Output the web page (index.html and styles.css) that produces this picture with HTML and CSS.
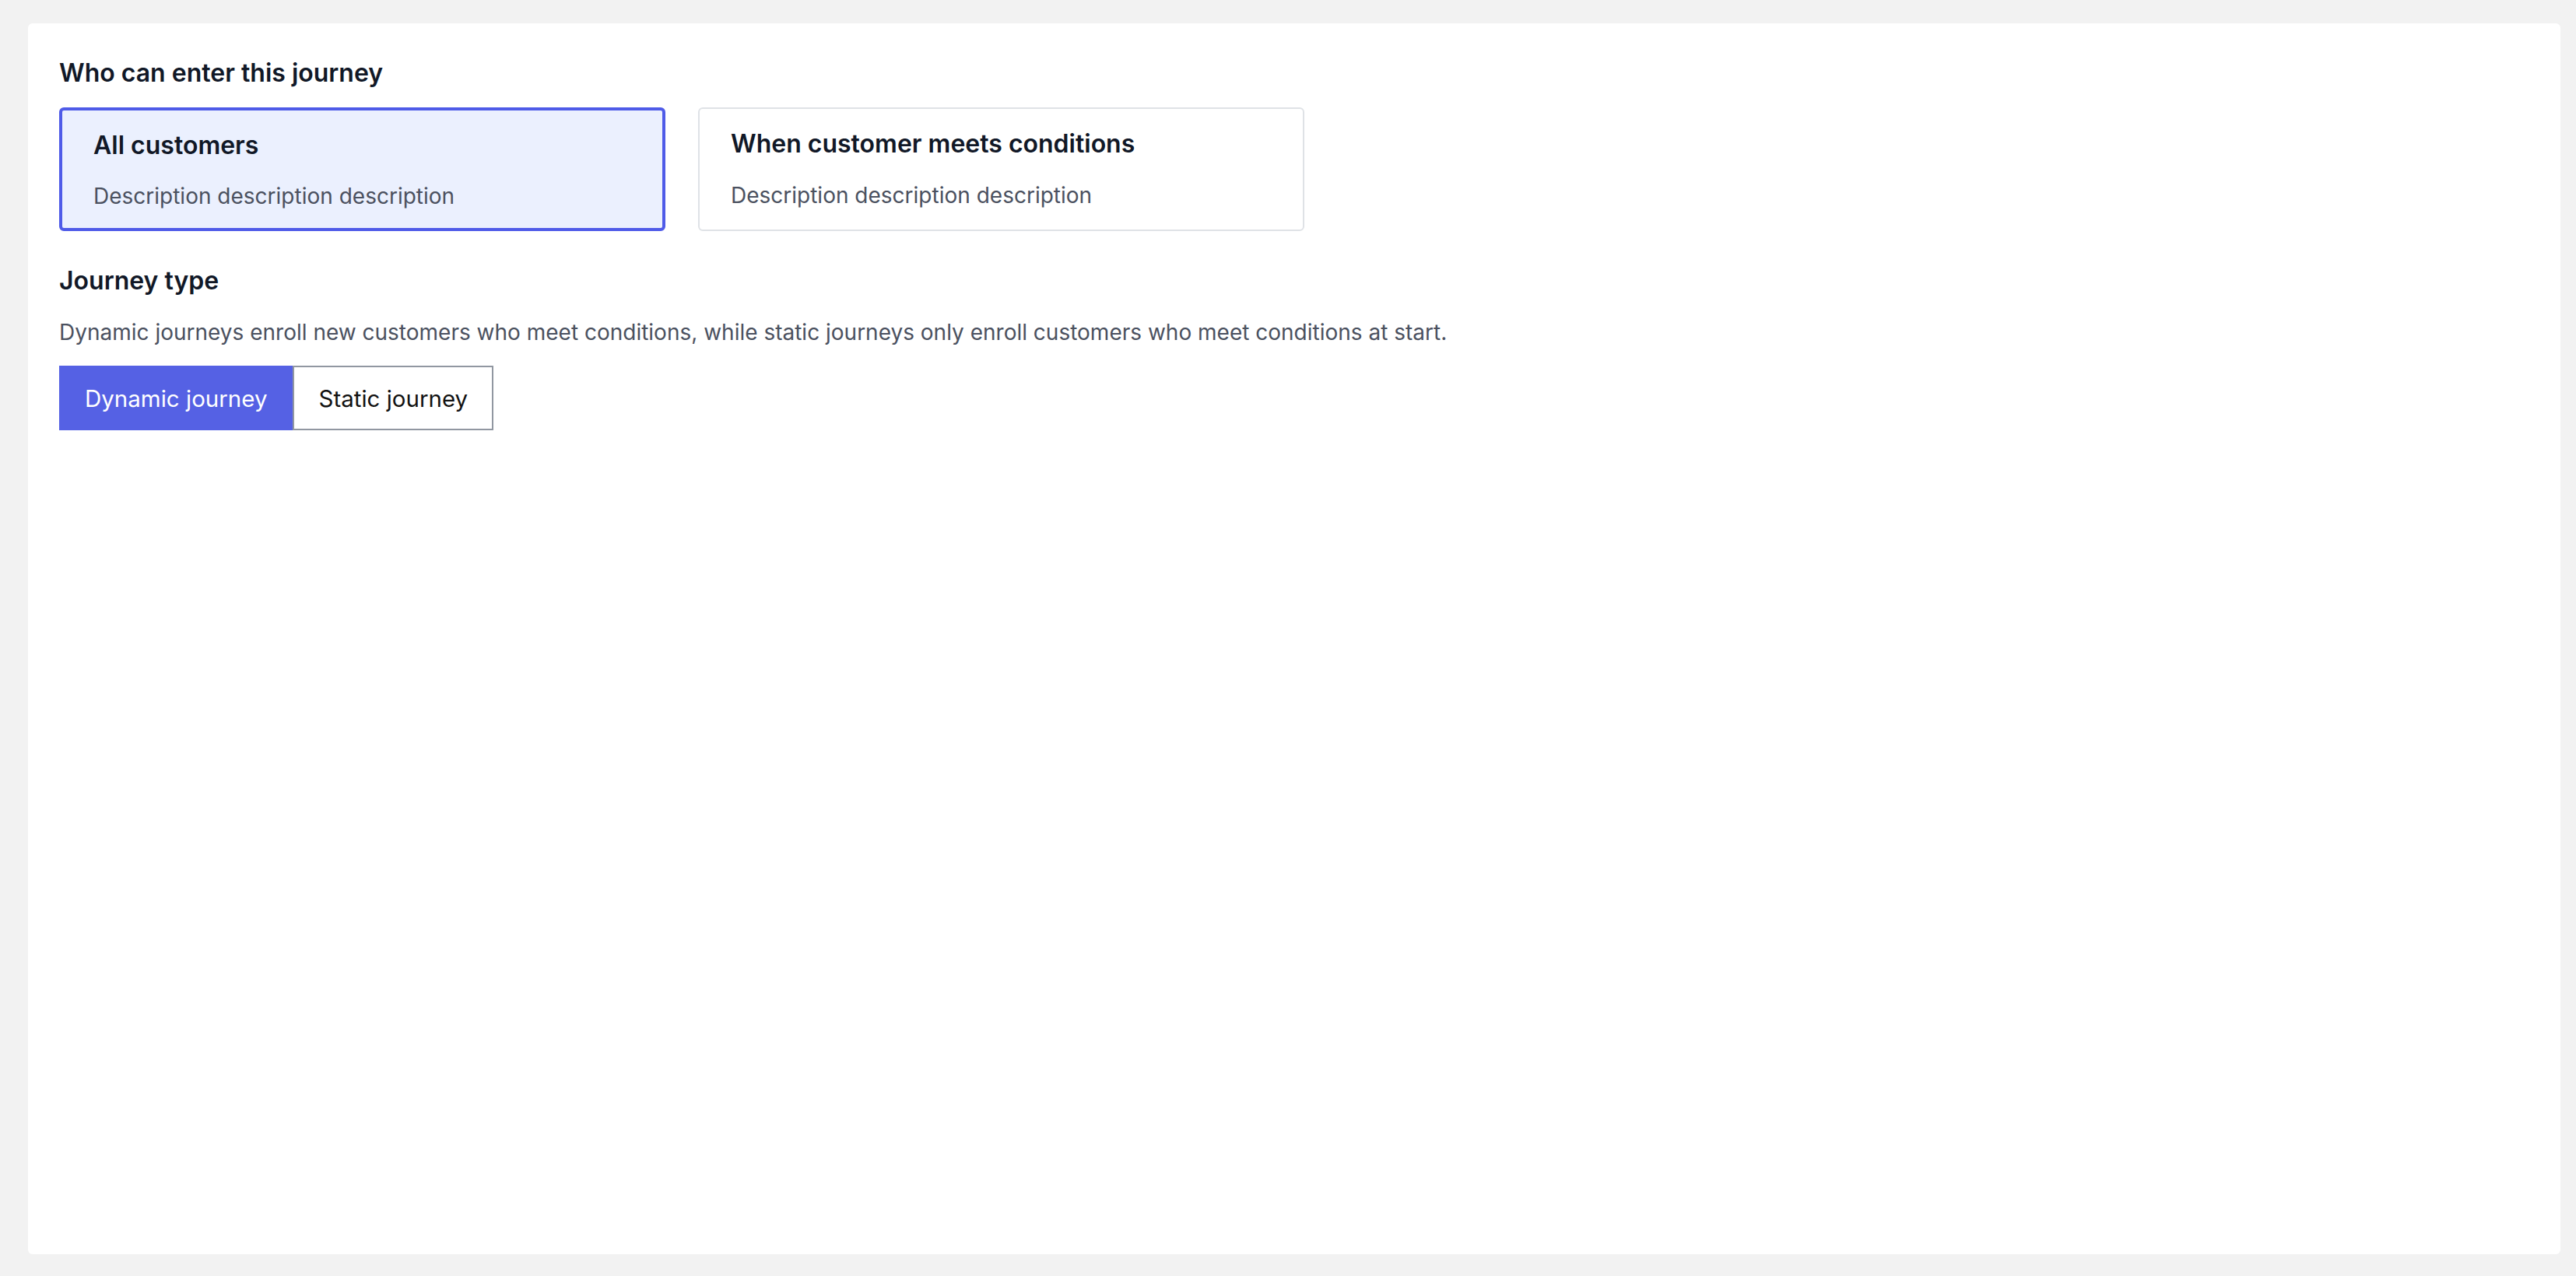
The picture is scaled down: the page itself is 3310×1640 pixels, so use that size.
FILE: index.html
```html
<!DOCTYPE html>
<html lang="en">
<head>
  <meta charset="UTF-8">
  <meta name="viewport" content="width=device-width, initial-scale=1.0">
  <title>Journey settings</title>
  <link rel="stylesheet" href="styles.css">
</head>
<body>

  <div class="panel">
    <h2 class="section-title">Who can enter this journey</h2>

    <div class="entry-options">
      <div class="entry-card selected">
        <div class="entry-title">All customers</div>
        <div class="entry-desc">Description description description</div>
      </div>
      <div class="entry-card">
        <div class="entry-title">When customer meets conditions</div>
        <div class="entry-desc">Description description description</div>
      </div>
    </div>

    <h2 class="section-title journey-type">Journey type</h2>
    <p class="section-help">Dynamic journeys enroll new customers who meet conditions, while static journeys only enroll customers who meet conditions at start.</p>

    <div class="toggle-group">
      <button class="toggle-btn active">Dynamic journey</button>
      <button class="toggle-btn">Static journey</button>
    </div>
  </div>

</body>
</html>
```

FILE: styles.css
```css
body {
  margin: 0;
  padding: 30px 20px 28px 36px;
  background: #f2f2f2;
  font-family: Inter, "Noto Sans", sans-serif;
  color: #111827;
}

.panel {
  background: #fff;
  border-radius: 6px;
  height: calc(100vh - 58px);
  box-sizing: border-box;
  padding: 44px 40px;
}

.section-title {
  margin: 0;
  font-size: 32px;
  line-height: 40px;
  font-weight: 600;
  color: #111827;
}

.journey-type {
  margin-top: 44px;
}

/* Entry cards */
.entry-options {
  display: flex;
  gap: 42px;
  margin-top: 24px;
}

.entry-card {
  width: 779px;
  height: 159px;
  box-sizing: border-box;
  border: 2px solid #dfe2e6;
  border-radius: 6px;
  padding: 25px 40px 0;
  background: #fff;
}

.entry-card.selected {
  border: 4px solid #4f5be8;
  background: #ebf0fe;
}

.entry-title {
  font-size: 32px;
  line-height: 40px;
  font-weight: 600;
  color: #111827;
}

.entry-desc {
  margin-top: 28px;
  font-size: 28px;
  line-height: 36px;
  color: #4b5160;
}

.entry-card.selected .entry-desc {
  margin-top: 27px;
}

.section-help {
  margin: 28px 0 25px;
  font-size: 28px;
  line-height: 36px;
  color: #4b5160;
}

/* Toggle buttons */
.toggle-group {
  display: flex;
}

.toggle-btn {
  height: 83px;
  padding: 0 31px;
  white-space: nowrap;
  font-family: inherit;
  font-size: 29.5px;
  color: #111;
  background: #fff;
  border: 2px solid #9197a1;
  cursor: pointer;
}

.toggle-btn.active {
  background: #5561e4;
  border-color: #5561e4;
  color: #fff;
}
```
